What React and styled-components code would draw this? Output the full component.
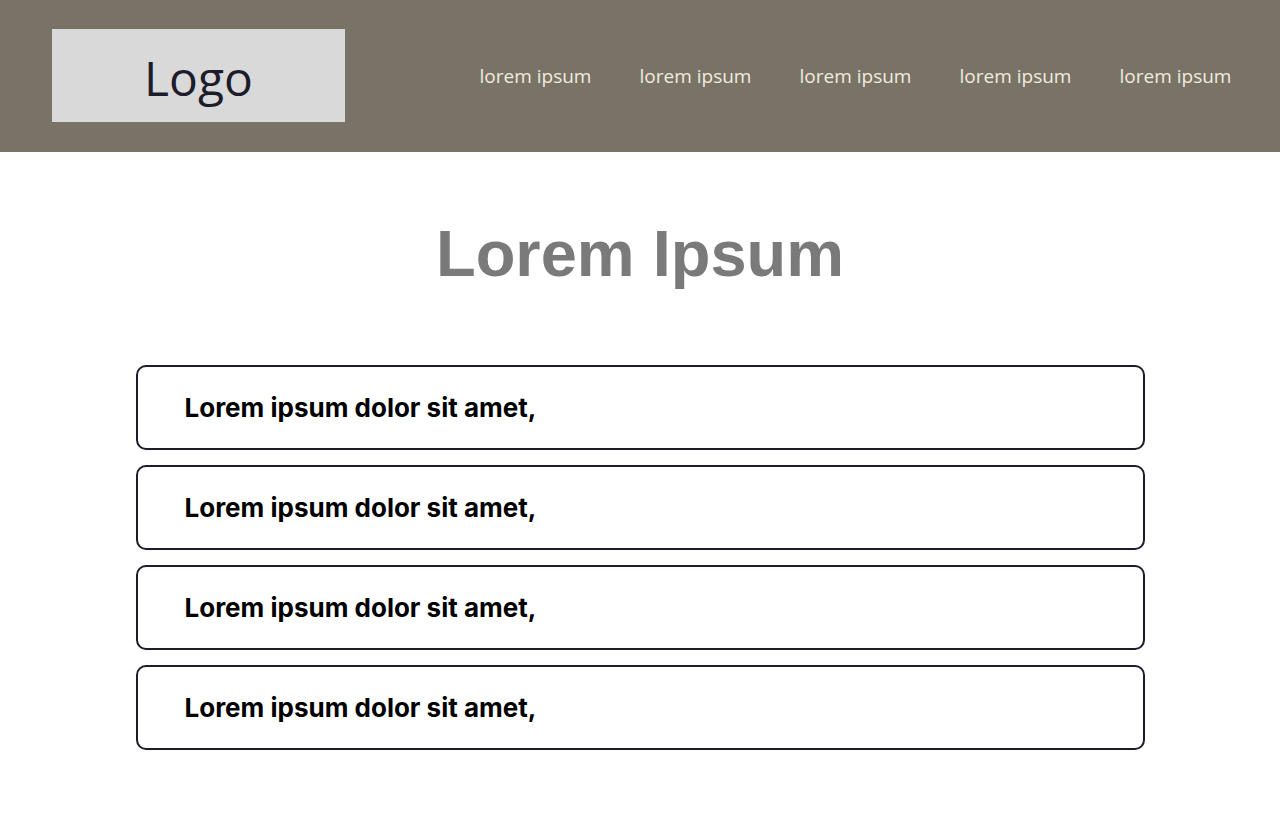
import React from "react";
import styled, { createGlobalStyle } from "styled-components";

const Global = createGlobalStyle`
  html, body { margin: 0; padding: 0; background: #ffffff; }
  body { font-family: "Liberation Sans", Arial, sans-serif; }
`;

const Header = styled.header`
  height: 152px;
  background: #797367;
  display: flex;
  align-items: center;
  justify-content: space-between;
  padding: 0 48px 0 52px;
  box-sizing: border-box;
`;

const LogoBox = styled.div`
  width: 293px;
  height: 93px;
  background: #d9d9d9;
  display: flex;
  align-items: center;
  justify-content: center;
  font-family: "Open Sans", "Noto Sans", sans-serif;
  font-size: 48px;
  line-height: 1;
  padding-top: 4px;
  box-sizing: border-box;
  color: #1c1c2a;
  margin-top: -1px;
`;

const Nav = styled.nav`
  display: flex;
  gap: 47px;
`;

const NavLink = styled.a`
  font-family: "Open Sans", "Noto Sans", sans-serif;
  font-size: 19px;
  color: #f1ebdc;
  text-decoration: none;
  width: 113px;
  text-align: center;
  white-space: nowrap;
`;

const Main = styled.main`
  width: 1009px;
  margin: 0 auto;
  display: flex;
  flex-direction: column;
  align-items: stretch;
`;

const Title = styled.h1`
  margin: 65px 0 0;
  height: 148px;
  text-align: center;
  font-family: "Liberation Sans", Arial, sans-serif;
  font-weight: 700;
  font-size: 65px;
  line-height: 74px;
  color: #7a7a7a;
`;

const List = styled.ul`
  list-style: none;
  margin: 0;
  padding: 0;
  display: flex;
  flex-direction: column;
  gap: 15px;
`;

const Item = styled.li`
  height: 85px;
  box-sizing: border-box;
  border: 2px solid #1c1c2a;
  border-radius: 10px;
  display: flex;
  align-items: center;
  padding-left: 47px;
  font-family: Inter, "Liberation Sans", sans-serif;
  font-weight: 700;
  font-size: 26px;
  color: #000;
`;

const links = ["lorem ipsum", "lorem ipsum", "lorem ipsum", "lorem ipsum", "lorem ipsum"];
const items = [1, 2, 3, 4];

export default function App() {
  return (
    <>
      <Global />
      <Header>
        <LogoBox>Logo</LogoBox>
        <Nav>
          {links.map((l, i) => (
            <NavLink key={i} href="#">{l}</NavLink>
          ))}
        </Nav>
      </Header>
      <Main>
        <Title>Lorem Ipsum</Title>
        <List>
          {items.map((i) => (
            <Item key={i}>Lorem ipsum dolor sit amet,</Item>
          ))}
        </List>
      </Main>
    </>
  );
}
